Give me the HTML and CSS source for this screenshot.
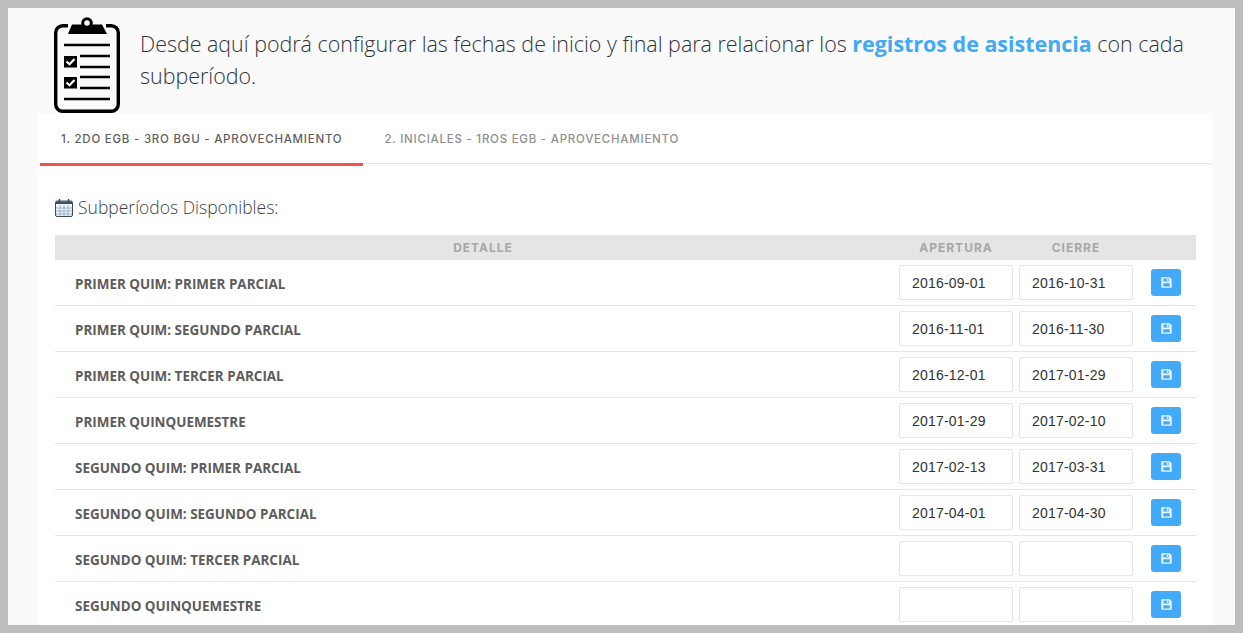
FILE: index.html
```html
<!DOCTYPE html>
<html lang="es">
<head>
<meta charset="utf-8">
<title>Subperíodos</title>
<link rel="stylesheet" href="styles.css">
</head>
<body>
<svg width="0" height="0" class="defs">
  <symbol id="save" viewBox="0 0 12 12">
    <path fill="currentColor" fill-rule="evenodd" d="M1.200 1.200h7.700L10.800 3.100V10.800H1.200zM3.200 2.200v2.800h4.800V2.200zM6.300 2.600h1v2h-1zM3 6.800v3h6v-3z"/>
  </symbol>
</svg>
<main class="frame">
  <header class="intro">
    <svg class="clipboard" width="68" height="98" viewBox="0 0 68 98">
      <path fill="none" stroke="#000" stroke-width="3.400" d="M15 8.700H9.700a7 7 0 0 0-7 7v71.600a7 7 0 0 0 7 7h48.600a7 7 0 0 0 7-7V15.700a7 7 0 0 0-7-7H53"/>
      <path fill="#000" d="M15 17l4-9.500h30l5 9.500z"/>
      <circle cx="34" cy="6" r="4.300" fill="#fafafa" stroke="#000" stroke-width="3"/>
      <path stroke="#000" stroke-width="2.600" d="M11 28h46M27 39h30M27 50h30M27 60h30M27 71h30M11 82h46"/>
      <rect x="11" y="39" width="13" height="11.500" fill="#000"/>
      <rect x="11" y="60" width="13" height="11.500" fill="#000"/>
      <path fill="none" stroke="#fff" stroke-width="2.200" d="M13.500 44.500l3 2.800 5-5.300M13.500 65.500l3 2.800 5-5.300"/>
    </svg>
    <p class="intro-text">Desde aquí podrá configurar las fechas de inicio y final para relacionar los <strong>registros de asistencia</strong> con cada subperíodo.</p>
  </header>
  <section class="panel">
    <nav class="tabs">
      <a class="tab tab-active">1. 2DO EGB - 3RO BGU - APROVECHAMIENTO</a>
      <a class="tab">2. INICIALES - 1ROS EGB - APROVECHAMIENTO</a>
    </nav>
    <div class="content">
      <h2 class="title">
        <svg class="calendar" width="18" height="19" viewBox="0 0 18 19">
          <rect x="0.500" y="3" width="17" height="15.500" rx="1.500" fill="#f0f5fb" stroke="#3a4c60"/>
          <rect x="1" y="3.500" width="16" height="2.500" fill="#3a4c60"/>
          <path stroke="#9db0c6" stroke-width="1" d="M5 7v11M9 7v11M13 7v11M1 10h16M1 13h16M1 16h16"/>
          <path fill="none" stroke="#3a4c60" stroke-width="1.400" d="M4.500 5V1M13.500 5V1"/>
        </svg>
        Subperíodos Disponibles:
      </h2>
      <div class="table">
        <div class="head">
          <span class="col-detail">DETALLE</span>
          <span class="col-date">APERTURA</span>
          <span class="col-date">CIERRE</span>
          <span class="col-action"></span>
        </div>
        <div class="row">
          <span class="col-detail name">PRIMER QUIM: PRIMER PARCIAL</span>
          <input class="date" value="2016-09-01"><input class="date" value="2016-10-31">
          <button class="save"><svg width="13" height="13"><use href="#save"/></svg></button>
        </div>
        <div class="row">
          <span class="col-detail name">PRIMER QUIM: SEGUNDO PARCIAL</span>
          <input class="date" value="2016-11-01"><input class="date" value="2016-11-30">
          <button class="save"><svg width="13" height="13"><use href="#save"/></svg></button>
        </div>
        <div class="row">
          <span class="col-detail name">PRIMER QUIM: TERCER PARCIAL</span>
          <input class="date" value="2016-12-01"><input class="date" value="2017-01-29">
          <button class="save"><svg width="13" height="13"><use href="#save"/></svg></button>
        </div>
        <div class="row">
          <span class="col-detail name">PRIMER QUINQUEMESTRE</span>
          <input class="date" value="2017-01-29"><input class="date" value="2017-02-10">
          <button class="save"><svg width="13" height="13"><use href="#save"/></svg></button>
        </div>
        <div class="row">
          <span class="col-detail name">SEGUNDO QUIM: PRIMER PARCIAL</span>
          <input class="date" value="2017-02-13"><input class="date" value="2017-03-31">
          <button class="save"><svg width="13" height="13"><use href="#save"/></svg></button>
        </div>
        <div class="row">
          <span class="col-detail name">SEGUNDO QUIM: SEGUNDO PARCIAL</span>
          <input class="date" value="2017-04-01"><input class="date" value="2017-04-30">
          <button class="save"><svg width="13" height="13"><use href="#save"/></svg></button>
        </div>
        <div class="row">
          <span class="col-detail name">SEGUNDO QUIM: TERCER PARCIAL</span>
          <input class="date" value=""><input class="date" value="">
          <button class="save"><svg width="13" height="13"><use href="#save"/></svg></button>
        </div>
        <div class="row">
          <span class="col-detail name">SEGUNDO QUINQUEMESTRE</span>
          <input class="date" value=""><input class="date" value="">
          <button class="save"><svg width="13" height="13"><use href="#save"/></svg></button>
        </div>
      </div>
    </div>
  </section>
</main>
</body>
</html>
```
FILE: styles.css
```css
* { box-sizing: border-box; }
html, body { margin: 0; height: 100%; overflow: hidden; }
body {
  background: #bdbdbd;
  padding: 8px;
  font-family: "Open Sans", sans-serif;
}
.defs { position: absolute; }
.frame {
  height: 617px;
  overflow: hidden;
  background: #fafafa;
}
.intro {
  height: 105px;
  display: flex;
  align-items: flex-start;
  padding: 9px 20px 0 45px;
  gap: 19px;
}
.clipboard { flex: none; }
.intro-text {
  margin: 11px 0 0;
  font-size: 21.450px;
  font-weight: 300;
  line-height: 32px;
  color: #2f3540;
}
.intro-text strong { font-weight: 700; color: #42a9f5; }
.panel {
  margin: 0 23px 0 31px;
  background: #fff;
  height: 512px;
}
.tabs {
  display: flex;
  height: 51px;
  margin-left: 1px;
  margin-right: 1px;
  border-bottom: 1px solid #e4e4e4;
}
.tab {
  height: 53px;
  padding: 1px 21px 0;
  display: flex;
  align-items: center;
  border-bottom: 3px solid transparent;
  font-family: Inter, sans-serif;
  font-size: 11.500px;
  font-weight: 500;
  letter-spacing: 0.760px;
  color: #8f8f8f;
}
.tab-active {
  color: #5f5f5f;
  border-bottom-color: #f05451;
}
.content { padding: 31px 16px 0; }
.title {
  margin: 0 0 16px;
  height: 24px;
  display: flex;
  align-items: center;
  gap: 5px;
  font-size: 17.500px;
  font-weight: 300;
  color: #3a3f47;
}
.calendar { flex: none; }
.head, .row {
  display: flex;
  align-items: center;
  gap: 6px;
}
.head {
  height: 25px;
  background: #e5e5e5;
  font-family: Inter, sans-serif;
  font-size: 12px;
  font-weight: 700;
  letter-spacing: 1px;
  color: #a9a6a4;
}
.head .col-detail { padding-left: 18px; text-align: center; }
.col-detail { width: 838px; flex: none; }
.col-date { width: 114px; flex: none; text-align: center; }
.row { height: 46px; padding-bottom: 1px; border-bottom: 1px solid #e4e4e4; }
.row:last-child { border-bottom-color: transparent; }
.name {
  padding: 4px 0 0 20px;
  font-size: 13.450px;
  font-weight: 700;
  color: #5c5c5c;
}
.date {
  width: 114px;
  height: 35px;
  flex: none;
  padding: 1px 12px 0;
  border: 1px solid #e6e6e6;
  border-radius: 2px;
  background: #fff;
  font-family: "Liberation Sans", sans-serif;
  font-size: 14px;
  letter-spacing: 0.200px;
  color: #333;
  outline: 0;
}
.save {
  width: 30px;
  height: 27px;
  margin-left: 12px;
  padding: 0;
  display: flex;
  align-items: center;
  justify-content: center;
  border: 0;
  border-radius: 3px;
  background: #42aaf8;
  color: #e8f4fe;
}
```
